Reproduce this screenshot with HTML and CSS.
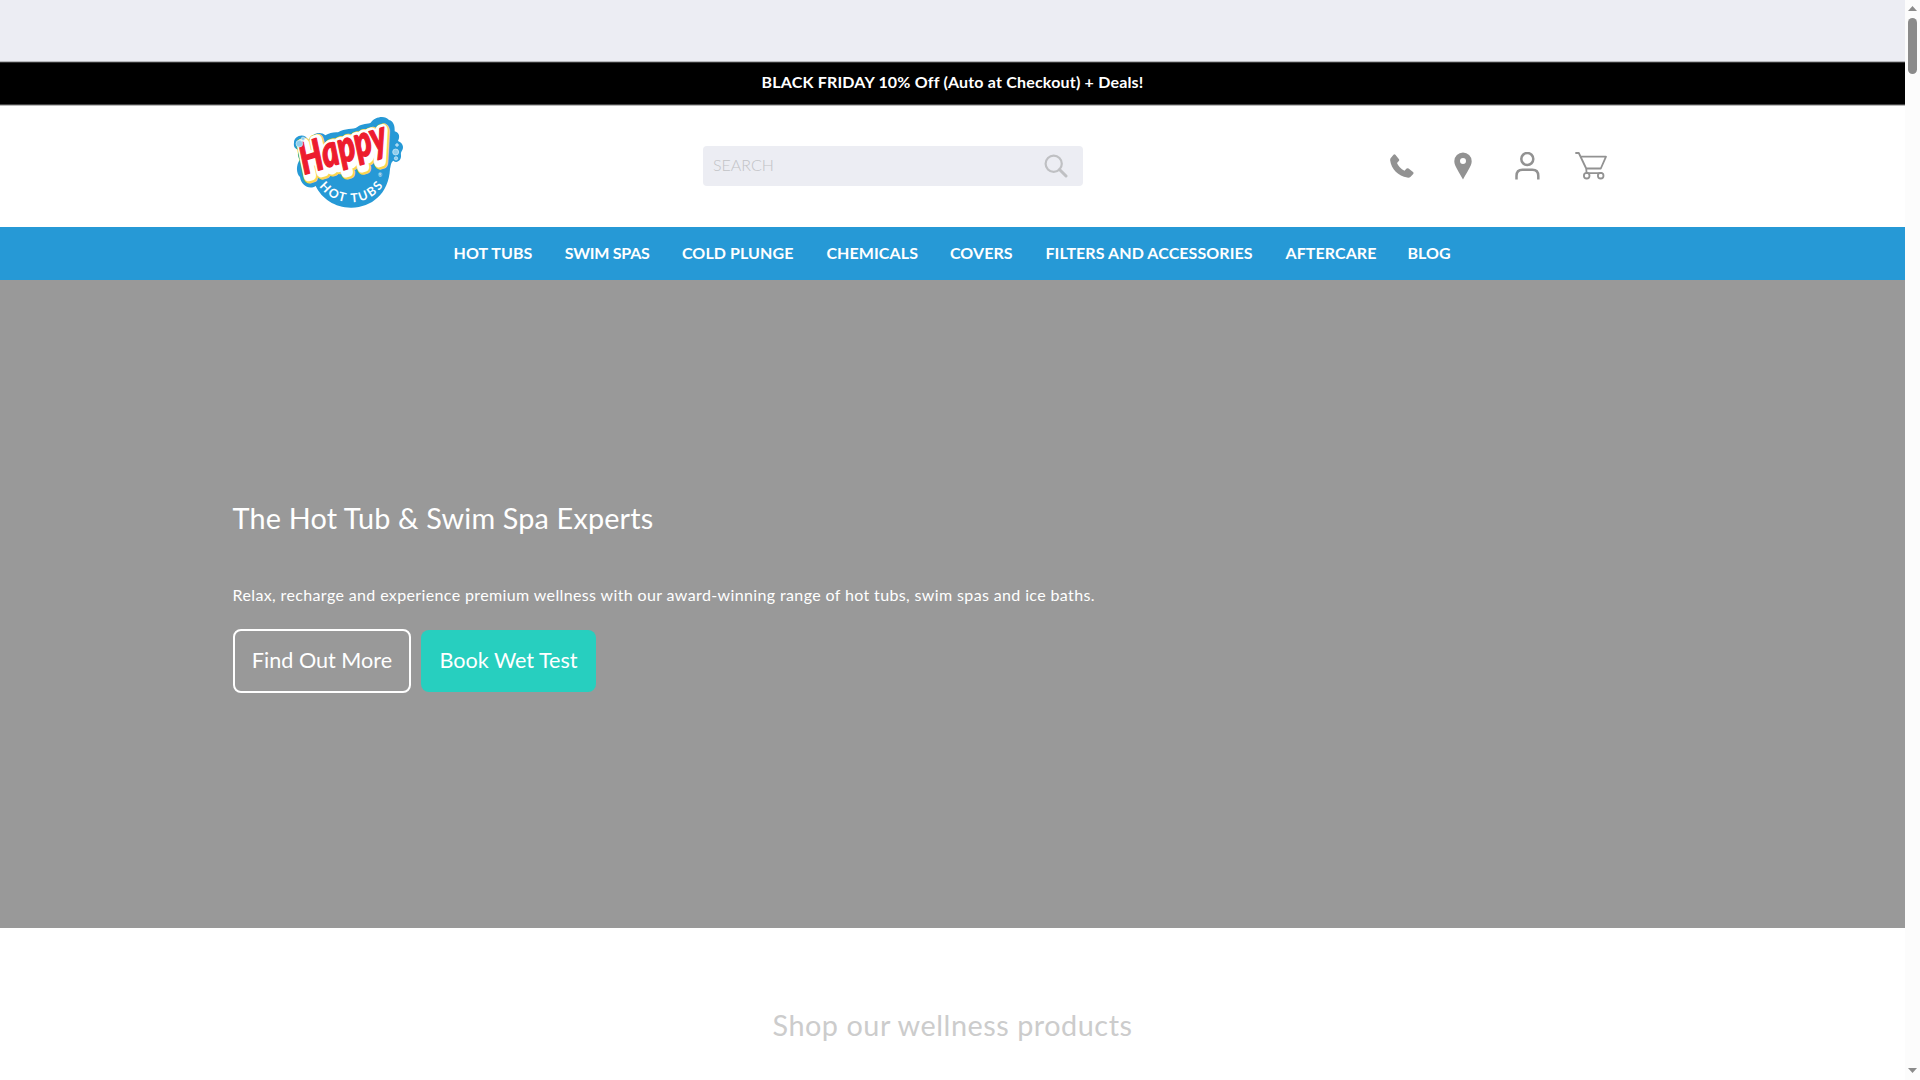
FILE: index.html
```html
<!DOCTYPE html>
<html lang="en">
<head>
<meta charset="utf-8">
<title>Happy Hot Tubs</title>
<link rel="stylesheet" href="styles.css">
</head>
<body>
<div class="page">
  <div class="topbar"></div>
  <div class="promo"><span>BLACK FRIDAY 10% Off (Auto at Checkout) + Deals!</span></div>
  <header class="header">
    <a class="logo" aria-label="Happy Hot Tubs">
      <svg width="140" height="115" viewBox="0 0 420 345">
        <path fill="#2699d6" d="M42 113C42 96 62 86 77 95C84 101 84 104 88 103C98 83 122 78 136 91C148 84 160 81 174 82C194 68 220 75 232 66C246 54 265 58 272 53C284 35 315 29 327 45C341 48 345 64 344 79C361 84 359 99 354 108C366 113 373 124 367 135C364 140 362 143 363 151C365 166 350 177 340 167C332 172 333 181 330 192C326 267 274 307 215 308C166 309 125 281 107 243C87 256 63 240 60 216C48 204 48 181 59 164C51 150 54 142 57 134C45 132 40 124 42 113Z"/>
        <g class="script">
          <text class="halo-gold" transform="translate(82 216) rotate(-17) scale(.76 1)" textLength="342" lengthAdjust="spacingAndGlyphs">Happy</text>
          <text class="halo-white" transform="translate(80 214) rotate(-17) scale(.76 1)" textLength="342" lengthAdjust="spacingAndGlyphs">Happy</text>
          <text class="word" transform="translate(73 209) rotate(-17) scale(.76 1)" textLength="352" lengthAdjust="spacingAndGlyphs">Happy</text>
        </g>
        <path id="arc" fill="none" d="M118 244A118 118 0 0 0 313 236"/>
        <text class="arc-text"><textPath href="#arc" textLength="222">HOT TUBS</textPath></text>
        <text class="reg" x="294" y="217">®</text>
        <g fill="#8fcdec" stroke="#d6effa" stroke-width="2">
          <circle cx="58" cy="116" r="10"/><circle cx="69" cy="101" r="5"/>
          <circle cx="347" cy="141" r="9"/><circle cx="351" cy="120" r="4"/><circle cx="348" cy="160" r="5"/>
        </g>
      </svg>
    </a>
    <div class="search">
      <span>SEARCH</span>
      <svg width="24" height="24" viewBox="0 0 24 24" fill="none" stroke="#bfc0c3"><circle cx="9.7" cy="9.7" r="8.1" stroke-width="2.2"/><path d="M15.5 15.5L22 22" stroke-width="3" stroke-linecap="round"/></svg>
    </div>
    <div class="tools">
      <svg class="phone" width="24" height="24" viewBox="0 0 24 24"><path fill="#929292" d="M.6 4.2L3.5.7Q4.4-.2 5.4.8L9 5.2Q9.6 6.2 8.8 7.1L7 8.9Q8.9 13.7 14.5 16.7L16.6 14.6Q17.6 13.8 18.6 14.5L23 18Q24 19 23.2 20L20.6 22.8Q19.3 24 17.2 23.6C8.5 22.2 1.1 15 .2 6.6Q0 5.2.6 4.2Z"/></svg>
      <svg class="pin" width="18" height="28" viewBox="0 0 18 28"><path fill="#929292" fill-rule="evenodd" d="M9 .5A8.7 8.7 0 0 0 .3 9.2C.3 14 5.5 20.5 9 27.5C12.5 20.5 17.7 14 17.7 9.2A8.7 8.7 0 0 0 9 .5ZM9 6A3 3 0 1 1 9 12A3 3 0 0 1 9 6Z"/></svg>
      <svg class="user" width="25" height="28" viewBox="0 0 25 28" fill="none" stroke="#929292" stroke-width="2.5"><circle cx="12.3" cy="7" r="6"/><path d="M1.5 27.5V24Q1.5 17.8 7.5 17.8H17.3Q23.3 17.8 23.3 24V27.5"/></svg>
      <svg class="cart" width="32" height="28" viewBox="0 0 32 28" fill="none" stroke="#929292" stroke-width="1.8" stroke-linejoin="round" stroke-linecap="round"><path d="M1 1H3.8L11.2 16.5H25.8L31 4.7H5.8M11.2 16.5L11.6 21.2H26.5"/><circle cx="11.7" cy="23.7" r="2.8"/><circle cx="25.7" cy="23.7" r="2.8"/></svg>
    </div>
  </header>
  <nav class="nav">
    <a>HOT TUBS</a><a class="tight">SWIM SPAS</a><a>COLD PLUNGE</a><a>CHEMICALS</a><a>COVERS</a><a>FILTERS AND ACCESSORIES</a><a>AFTERCARE</a><a>BLOG</a>
  </nav>
  <section class="hero">
    <h1>The Hot Tub &amp; Swim Spa Experts</h1>
    <p>Relax, recharge and experience premium wellness with our award-winning range of hot tubs, swim spas and ice baths.</p>
    <div class="actions"><a class="btn outline">Find Out More</a><a class="btn teal">Book Wet Test</a></div>
  </section>
  <section class="shop"><h2>Shop our wellness products</h2></section>
</div>
<div class="scrollbar">
  <svg width="9" height="5" viewBox="0 0 9 5"><path fill="#8b8b8b" d="M4.5 0L9 5H0Z"/></svg>
  <div class="thumb"></div>
  <svg width="9" height="5" viewBox="0 0 9 5"><path fill="#8b8b8b" d="M0 0H9L4.5 5Z"/></svg>
</div>
</body>
</html>
```
FILE: styles.css
```css
* { box-sizing: border-box; }
body { margin: 0; height: 1080px; overflow: hidden; display: flex; background: #fff; font-family: Lato, "Open Sans", sans-serif; font-size: 16px; }
h1, h2, p { margin: 0; font-weight: 400; white-space: nowrap; }
.page { width: 1905px; }
.topbar { height: 62px; background: #ecedf3; border-bottom: 1px solid #b5b6ba; }
.promo { height: 43px; background: #000; border-top: 1px solid #333; border-bottom: 1px solid #444; color: #fff; font-weight: 700; line-height: 38px; text-align: center; letter-spacing: .19px; }
.header { height: 122px; border-top: 1px solid #bbb; display: flex; align-items: flex-start; padding-left: 280px; }
.logo { width: 140px; height: 115px; margin-top: -1px; }
.logo svg { display: block; }
.script text { font-family: Lato, sans-serif; font-weight: 900; font-style: italic; font-size: 130px; stroke-linejoin: round; }
.halo-gold { fill: #f9d54f; stroke: #f9d54f; stroke-width: 42px; }
.halo-white { fill: #fff; stroke: #fff; stroke-width: 33px; }
.word { fill: #ed1c2e; stroke: #ed1c2e; stroke-width: 4px; }
.arc-text { font-weight: 700; font-size: 37px; fill: #fff; }
.reg { font-size: 15px; fill: #fff; }
.search { width: 380px; height: 40px; margin: 40px 0 0 283px; padding: 0 15px 0 10px; border-radius: 4px; background: #ecedf3; display: flex; align-items: center; justify-content: space-between; color: #c2c3c6; font-weight: 300; }
.search span { padding-bottom: 3px; }
.search svg { margin-top: -1px; }
.tools { display: flex; align-items: center; height: 28px; margin: 46px 0 0 307px; }
.phone { margin-right: 40px; }
.pin { margin-right: 43px; }
.user { margin-right: 35px; }
.nav { height: 53px; background: #2699d6; display: grid; grid-template-columns: 111.2px 117.2px 144.5px 123.5px 95.5px 240px 122px 44px; justify-content: center; color: #fff; font-weight: 700; line-height: 51px; letter-spacing: .09px; white-space: nowrap; }
.nav .tight { letter-spacing: -.25px; }
.hero { height: 648px; padding: 217px 0 0 232.6px; background: #999; color: #fff; }
.hero h1 { font-size: 28.8px; line-height: 42px; letter-spacing: .17px; }
.hero p { margin-top: 44px; line-height: 24px; letter-spacing: .37px; }
.actions { display: flex; align-items: center; gap: 10px; margin: 22px 0 0 .4px; }
.btn { display: flex; align-items: center; justify-content: center; padding-bottom: 2px; border-radius: 8px; font-size: 21.6px; white-space: nowrap; }
.outline { width: 178px; height: 64px; border: 2px solid #fff; }
.teal { width: 175px; height: 62px; background: #27cfbf; }
.shop { height: 152px; padding-top: 76px; text-align: center; color: #ccc; }
.shop h2 { font-size: 28.8px; line-height: 42px; letter-spacing: .53px; }
.scrollbar { width: 15px; height: 1080px; padding: 6px 0 7px 3px; background: #fcfcfc; display: flex; flex-direction: column; }
.thumb { width: 9px; height: 56px; margin: 7px 0 auto; border-radius: 5px; background: #8b8b8b; }
```
